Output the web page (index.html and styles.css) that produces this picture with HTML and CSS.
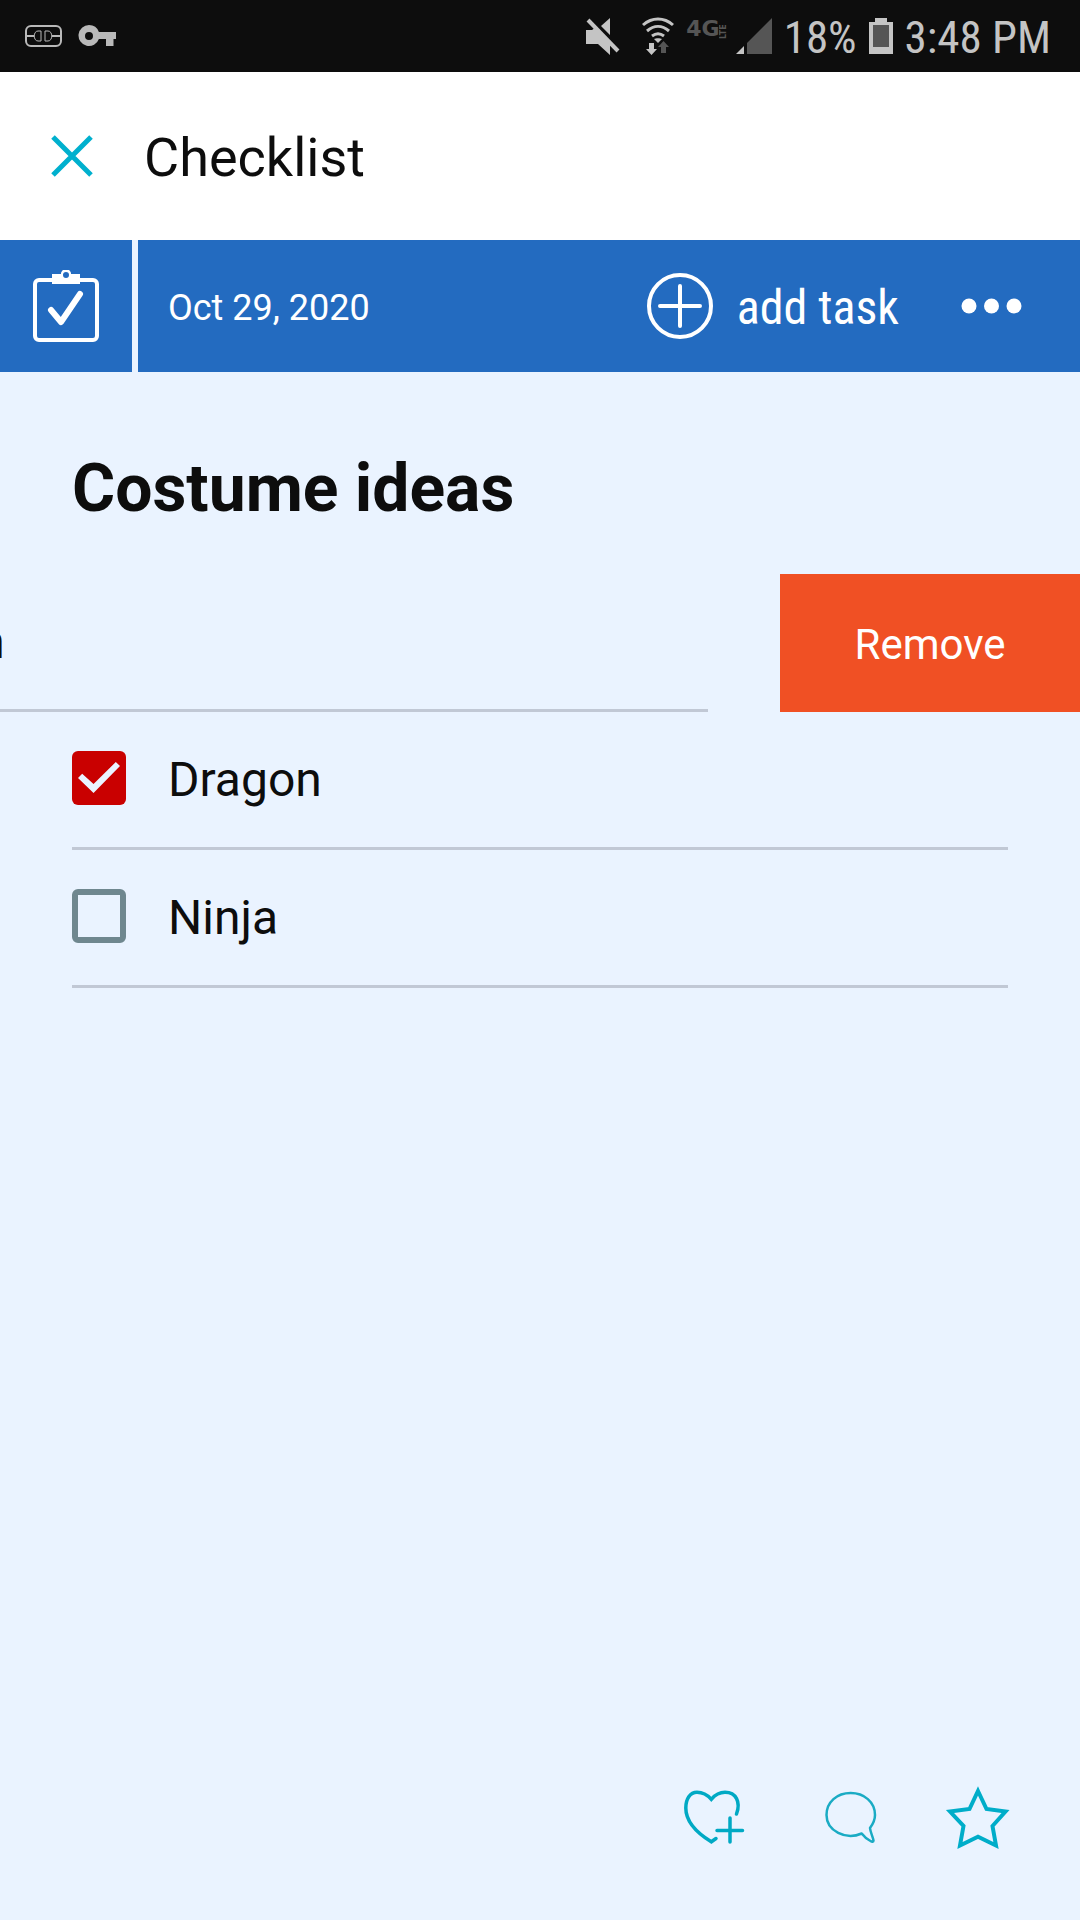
FILE: index.html
```html
<!DOCTYPE html>
<html lang="en">
<head>
  <meta charset="UTF-8">
  <meta name="viewport" content="width=device-width, initial-scale=1.0">
  <title>Checklist</title>
  <link rel="stylesheet" href="styles.css">
</head>
<body>
  <div class="status-bar">
    <svg class="status-vpn" width="38" height="24" viewBox="0 0 38 24" fill="none" stroke="#b9b9b9" aria-hidden="true">
      <rect x="2" y="2" width="35" height="20" rx="5" stroke-width="2"/>
      <path d="M2 12h8M28 12h8" stroke-width="2"/>
      <path d="M17 7v10h-3c-5 0-5-10 0-10zM21 7v10h3c5 0 5-10 0-10z" stroke-width="1"/>
    </svg>
    <svg width="38" height="24" viewBox="0 0 38 24" fill="#b9b9b9" aria-hidden="true">
      <path fill-rule="evenodd" d="M11 1a10.500 10.500 0 1 0 9.900 14H28v7h7.500v-7H38v-7H20.900a10.500 10.500 0 0 0-9.900-7zM11 8a4 4 0 1 1 0 8a4 4 0 0 1 0-8z"/>
    </svg>

    <div class="status-right">
      <svg width="34" height="38" viewBox="0 0 34 38" fill="#c4c4c4" aria-hidden="true">
        <path d="M0 13h6l4-3 14 15v13L12 27H0zM15 9l9-8v17z"/>
        <path d="M2 3l30 31" stroke="#c4c4c4" stroke-width="4"/>
      </svg>
      <svg class="status-wifi" width="32" height="38" viewBox="0 0 32 38" aria-hidden="true">
        <g fill="none" stroke="#c4c4c4" stroke-width="3">
          <path d="M1 8c9-8 21-8 30 0"/>
          <path d="M5 14c7-6 15-6 22 0"/>
          <path d="M10 19c4-3 8-3 12 0"/>
        </g>
        <path d="M12 22c2-1 6-1 8 0l-4 4z" fill="#c4c4c4"/>
        <path d="M7 26h5v6h3l-5.500 6L4 32h3z" fill="#c4c4c4"/>
        <path d="M19 36h5v-6h3l-5.500-6L16 30h3z" fill="#555"/>
      </svg>
      <div class="network">4G<small>LTE</small></div>
      <svg class="status-signal" width="36" height="36" viewBox="0 0 36 36" aria-hidden="true">
        <path d="M11 36V25L36 0v36z" fill="#555"/>
        <path d="M0 36l8-8v8z" fill="#c4c4c4"/>
      </svg>
      <span>18%</span>
      <svg class="status-battery" width="24" height="36" viewBox="0 0 24 36" aria-hidden="true">
        <path d="M0 4h6V0h12v4h6v32H0z" fill="#c4c4c4"/>
        <path d="M4 7h16v22H4z" fill="#555"/>
      </svg>
      <span>3:48 PM</span>
    </div>
  </div>

  <header class="page-header">
    <button class="icon-button" aria-label="Close">
      <svg width="42" height="42" viewBox="0 0 42 42" fill="none" stroke="#00b0ce" stroke-width="5">
        <path d="M2 2l38 38M40 2L2 40"/>
      </svg>
    </button>
    <h1>Checklist</h1>
  </header>

  <div class="toolbar">
    <div class="toolbar-icon">
      <svg width="66" height="72" viewBox="0 0 66 72" fill="none" stroke="#fff" aria-hidden="true">
        <rect x="2" y="10" width="62" height="60" rx="4" stroke-width="4"/>
        <path d="M19 4h9a5 5 0 0 1 10 0h9v10H19z" fill="#fff" stroke="none"/>
        <circle cx="33" cy="5" r="4" fill="#236bc0" stroke-width="2"/>
        <path d="M18 40l10 12L47 24" stroke-width="6" stroke-linecap="round" stroke-linejoin="round"/>
      </svg>
    </div>
    <div class="toolbar-main">
      <time datetime="2020-10-29">Oct 29, 2020</time>
      <button class="icon-button add-task">
        <svg width="66" height="66" viewBox="0 0 66 66" fill="none" stroke="#fff" stroke-width="4" stroke-linecap="round" aria-hidden="true">
          <circle cx="33" cy="33" r="31"/>
          <path d="M33 13v40M13 33h40"/>
        </svg>
        <span>add task</span>
      </button>
      <button class="icon-button" aria-label="More">
        <svg width="61" height="16" viewBox="0 0 61 16" fill="#fff">
          <circle cx="8" cy="8" r="7.500"/>
          <circle cx="30.500" cy="8" r="7.500"/>
          <circle cx="53" cy="8" r="7.500"/>
        </svg>
      </button>
    </div>
  </div>

  <main>
    <h2>Costume ideas</h2>
    <ul class="tasks">
      <li class="swiped">
        <div class="task">
          <input type="checkbox" id="task1">
          <label for="task1">Goblin</label>
        </div>
        <button class="remove">Remove</button>
      </li>
      <li>
        <div class="task">
          <input type="checkbox" id="task2" checked>
          <label for="task2">Dragon</label>
        </div>
      </li>
      <li>
        <div class="task">
          <input type="checkbox" id="task3">
          <label for="task3">Ninja</label>
        </div>
      </li>
    </ul>
  </main>

  <footer>
    <button class="icon-button" aria-label="Like">
      <svg width="66" height="66" viewBox="0 0 66 66" fill="none" stroke="#00a9c4" stroke-width="3.500" stroke-linecap="round">
        <path d="M54.500 29C59 17 54 7.300 43 7.300C37 7.300 33 10 29.300 14.300C25 9.500 20 7.300 15 7.300C8 7.300 3.800 14 3.800 23C3.800 36 15 48 29.300 56.800L34 53.500"/>
        <path d="M48 33v24M35 45.500h25.500"/>
      </svg>
    </button>
    <button class="icon-button" aria-label="Comment">
      <svg width="66" height="66" viewBox="0 0 66 66" fill="none" stroke="#1aabc4" stroke-width="2.500" stroke-linejoin="round">
        <path d="M48.700 48.500C33 55.500 13.500 46 13.500 30C13.500 17 24 8 37.700 8C51 8 62 17 62 30C62 35 60 39 57 43C57.500 48 60 52 60.500 55.500C60.500 57 59 57 57.500 56Q52 53 48.700 48.500z"/>
      </svg>
    </button>
    <button class="icon-button" aria-label="Favorite">
      <svg width="66" height="66" viewBox="0 0 66 66" fill="none" stroke="#00adc9" stroke-width="4">
        <path d="M34 6L42.500 24L61.500 26.500L48.500 41L52 60.500L34 51.700L16 60.500L19.500 41L6 26.500L25.500 24z"/>
      </svg>
    </button>
  </footer>
</body>
</html>
```
FILE: styles.css
```css
* {
  box-sizing: border-box;
}

body {
  margin: 0;
  min-height: 100vh;
  display: flex;
  flex-direction: column;
  background-color: #eaf3ff;
  color: #0d0d0d;
  font-family: Roboto, "Liberation Sans", sans-serif;
  overflow-x: hidden;
}

svg {
  display: block;
  flex: none;
}

h1, h2, ul {
  margin: 0;
  padding: 0;
  font-size: inherit;
}

button {
  border: 0;
  padding: 0;
  font: inherit;
  color: inherit;
  cursor: pointer;
}

.icon-button {
  background: none;
}

/* phone status bar */
.status-bar {
  display: flex;
  align-items: center;
  gap: 16px;
  height: 72px;
  padding: 0 29px 0 24px;
  background-color: #0d0d0d;
  color: #c4c4c4;
  font-family: "Roboto Condensed", Roboto, sans-serif;
  font-size: 45px;
}

.status-right {
  display: flex;
  align-items: center;
  gap: 12px;
  margin-left: auto;
}

.status-wifi {
  margin-left: 10px;
}

.network {
  display: flex;
  margin-right: -4px;
  padding-bottom: 14px;
  color: #555;
  font-family: "DejaVu Sans", sans-serif;
  font-size: 22px;
  font-weight: bold;
  line-height: 20px;
}

.network small {
  font-size: 8px;
  line-height: 8px;
  writing-mode: vertical-rl;
  transform: rotate(180deg);
}

.page-header {
  display: flex;
  align-items: center;
  gap: 51px;
  height: 168px;
  padding: 0 51px;
  background-color: #fff;
}

.page-header h1 {
  font-size: 54px;
  font-weight: normal;
}

/* date and actions */
.toolbar {
  display: flex;
  gap: 6px;
  height: 132px;
  color: #fff;
}

.toolbar-icon {
  display: flex;
  align-items: center;
  justify-content: center;
  width: 132px;
  background-color: #236bc0;
}

.toolbar-main {
  flex: 1;
  display: flex;
  align-items: center;
  gap: 62px;
  padding: 0 58px 0 30px;
  background-color: #236bc0;
}

.toolbar-main time {
  flex: 1;
  font-size: 36px;
}

.add-task {
  display: flex;
  align-items: center;
  gap: 24px;
  font-family: "Roboto Condensed", Roboto, sans-serif;
  font-size: 48px;
}

main {
  flex: 1;
  padding-top: 74px;
}

main h2 {
  padding: 0 72px;
  font-size: 66px;
  line-height: 86px;
  font-weight: bold;
}

.tasks {
  margin-top: 42px;
  list-style: none;
}

.tasks li {
  display: flex;
  height: 138px;
  padding: 0 72px;
  overflow: hidden;
}

.task {
  flex: 1;
  display: flex;
  align-items: center;
  gap: 42px;
  padding-bottom: 3px;
  border-bottom: 3px solid #c1c8d5;
  font-size: 48px;
}

.task input {
  appearance: none;
  width: 54px;
  height: 54px;
  margin: 0;
  border: 6px solid #6f878f;
  border-radius: 6px;
}

.task input:checked {
  border: 0;
  background-color: #c90000;
}

/* tick mark */
.task input:checked::before {
  content: "";
  display: block;
  width: 42px;
  height: 31px;
  margin: 11px 0 0 6px;
  background-color: #eaf3ff;
  clip-path: polygon(0 52%, 10% 38%, 37% 71%, 90% 0, 100% 13%, 37% 100%);
}

/* row pulled left, remove button showing */
.tasks .swiped {
  gap: 72px;
  padding-right: 0;
}

.swiped .task {
  margin-left: -300px;
}

.remove {
  width: 300px;
  background-color: #f05024;
  color: #fff;
  font-size: 42px;
}

/* Roboto sits a little high in its line box */
h1, time, label, .remove, .add-task span, .status-right span {
  padding-top: 3px;
}

footer {
  display: flex;
  justify-content: flex-end;
  gap: 65px;
  padding: 0 70px 69px;
}
```
